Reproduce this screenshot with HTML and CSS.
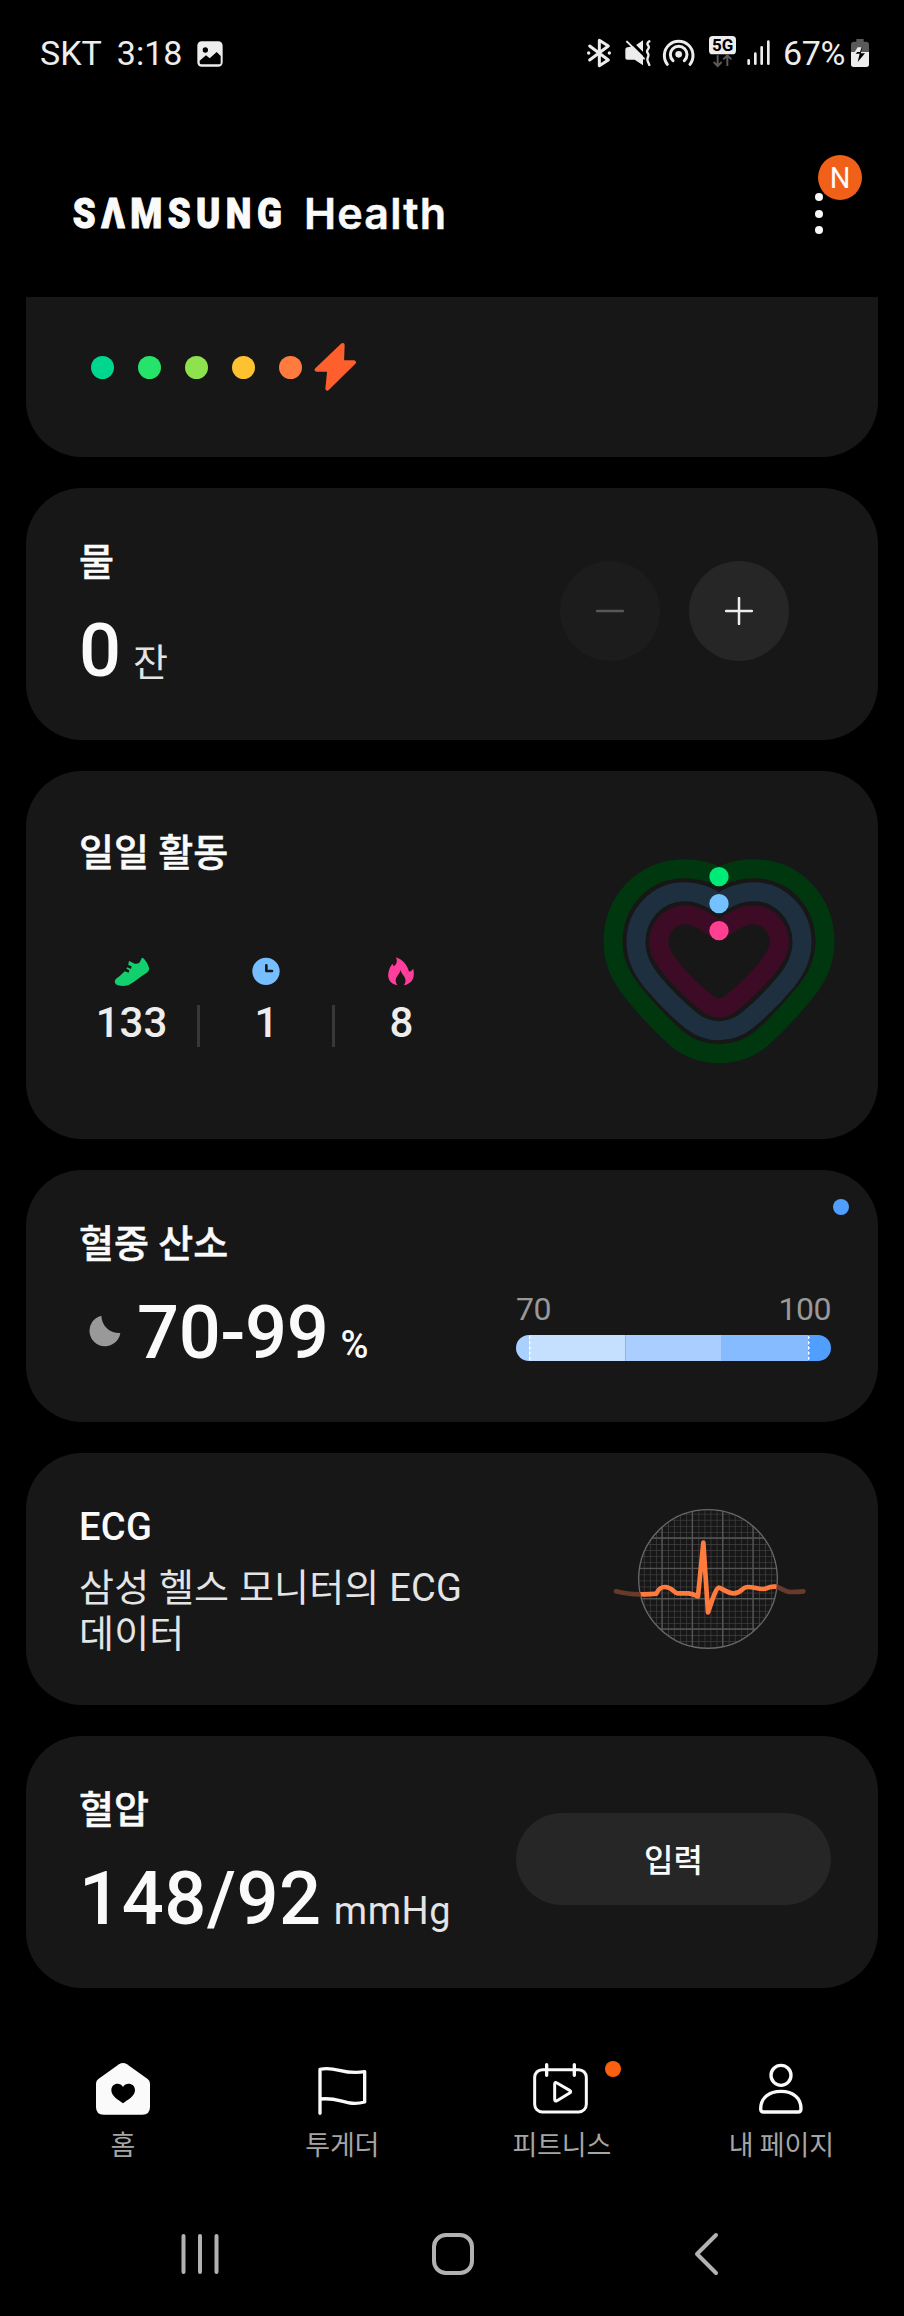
FILE: index.html
```html
<!DOCTYPE html>
<html lang="ko">
<head>
    <meta charset="UTF-8">
    <meta name="viewport" content="width=device-width, initial-scale=1.0">
    <title>Samsung Health</title>
    <link rel="stylesheet" href="styles.css">
</head>
<body>
    <div class="status-bar">
        <span class="carrier">SKT</span>
        <span class="clock">3:18</span>
        <svg class="st-photo" width="26" height="26" viewBox="0 0 78 78">
            <rect x="1" y="1" width="76" height="76" rx="13" fill="#ededed"/>
            <circle cx="25" cy="27" r="8" fill="#000"/>
            <path d="M8 59l19-16 11 9 21-19 12 12v21q0 4-4 4H13q-5 0-5-5z" fill="#000"/>
        </svg>
        <div class="status-right">
            <svg class="st-bt" width="24" height="32" viewBox="405 108 72 96" fill="none" stroke="#ededed" stroke-width="9" stroke-linejoin="round" stroke-linecap="round">
                <path d="M413 138l56 42-27 17v-76l27 17-56 42"/>
                <circle cx="410" cy="159" r="5" fill="#ededed" stroke="none"/>
                <circle cx="472" cy="159" r="5" fill="#ededed" stroke="none"/>
            </svg>
            <svg class="st-mute" width="26" height="32" viewBox="519 108 78 96">
                <path d="M548 138l25-17v75l-25-17h-22q-6 0-6-6v-23q0-8 7-8z" fill="#ededed"/>
                <path d="M530 119l52 52" stroke="#000" stroke-width="9"/>
                <path d="M525 125l51 51" stroke="#ededed" stroke-width="6" stroke-linecap="round"/>
                <path d="M592 124q-9 6-4 12t0 12-1 11 1 12-1 12 5 12" fill="none" stroke="#ededed" stroke-width="7" stroke-linecap="round"/>
            </svg>
            <svg class="st-hotspot" width="33" height="32" viewBox="631 108 99 96" fill="none" stroke="#ededed" stroke-width="9" stroke-linecap="round">
                <circle cx="681" cy="163" r="10" fill="#ededed" stroke="none"/>
                <path d="M664 182a25 25 0 1 1 34 0"/>
                <path d="M647 193a43 43 0 1 1 68 0"/>
            </svg>
            <svg class="st-5g" width="27" height="32" viewBox="771 108 81 96">
                <rect x="771" y="108" width="81" height="55" rx="11" fill="#ededed"/>
                <text x="812" y="154" text-anchor="middle" font-size="51" textLength="64" lengthAdjust="spacingAndGlyphs">5G</text>
                <path d="M797 166v32m-12-12l12 12 12-12M826 198v-32m-12 12l12-12 12 12" fill="none" stroke="#5a5a5a" stroke-width="6"/>
            </svg>
            <svg class="st-signal" width="24" height="32" viewBox="885 108 72 96" stroke="#ededed" stroke-width="8" stroke-linecap="round">
                <path d="M890 181v10M910 161v30M929 142v49M949 125v66"/>
            </svg>
            <span class="battery-text">67%</span>
            <svg class="st-battery" width="20" height="32" viewBox="1194 108 60 96">
                <path d="M1213 117h22v8h8q8 0 8 10v23h-54v-23q0-10 8-10h8z" fill="#5a5a5a"/>
                <path d="M1197 156h54v37q0 8-8 8h-38q-8 0-8-8z" fill="#ededed"/>
                <path d="M1228 142l-17 19h12l-6 25 22-26h-13l5-18z" fill="#000"/>
                <path d="M1217 142h12l-5 14h-16z" fill="#ededed"/>
            </svg>
        </div>
    </div>

    <header class="app-header">
        <svg class="logo" width="400" height="70" viewBox="0 -10 400 70" fill="#fafafa">
            <text class="logo-brand" x="1" y="40" textLength="246" transform="scale(0.85 1)">SΛMSUNG</text>
            <text class="logo-name" x="232" y="41" textLength="142">Health</text>
        </svg>
        <div class="more">
            <i></i><i></i><i></i>
            <span class="badge">N</span>
        </div>
    </header>

    <main class="cards">
        <section class="card card-energy">
            <i class="dot d1"></i>
            <i class="dot d2"></i>
            <i class="dot d3"></i>
            <i class="dot d4"></i>
            <i class="dot d5"></i>
            <svg class="bolt" width="44" height="50" viewBox="0 0 132 150">
                <path d="M86 9L8 83h38l-6 57 80-79H84z" fill="#ff5f2d" stroke="#ff5f2d" stroke-width="12" stroke-linejoin="round"/>
            </svg>
        </section>

        <section class="card">
            <div class="info">
                <h2>물</h2>
                <div class="value"><b>0</b><span class="unit">잔</span></div>
            </div>
            <div class="counter">
                <button class="round disabled">
                    <svg width="28" height="28" viewBox="0 0 28 28"><path d="M1 14h26"/></svg>
                </button>
                <button class="round">
                    <svg width="28" height="28" viewBox="0 0 28 28"><path d="M1 14h26M14 1v26"/></svg>
                </button>
            </div>
        </section>

        <section class="card card-activity">
            <div class="info">
                <h2>일일 활동</h2>
                <div class="stats">
                    <div class="stat">
                        <svg width="36" height="30" viewBox="341 592 108 90">
                            <path d="M386 604q-2 8-2 12l10 4-2 8-11-5-3 4 9 5-2 7-12-4c-9 10-19 18-27 24-6 6-1 16 7 18q18 4 32-1c20-10 34-25 50-34q14-8 11-18-7-20-18-29-4-2-6 5c-3 10-9 13-19 12z" fill="#13d06f"/>
                        </svg>
                        <strong>133</strong>
                    </div>
                    <div class="stat">
                        <svg width="30" height="30" viewBox="754 592 90 90">
                            <circle cx="796" cy="635" r="41" fill="#76beff"/>
                            <path d="M797 617v17h17" fill="none" stroke="#171717" stroke-width="8" stroke-linecap="round" stroke-linejoin="round"/>
                        </svg>
                        <strong>1</strong>
                    </div>
                    <div class="stat">
                        <svg width="30" height="30" viewBox="1160 592 90 90">
                            <path d="M1187 593c18 6 34 22 39 43q8-2 13-9c4 22 2 43-29 50 9-11 6-22-2-31q-7-8-7-15-3 9-8 15c-9 11-9 21-1 31-26-4-34-26-25-48q3-9 9-17l4 8c9-6 12-14 7-27z" fill="#ff3d9c"/>
                        </svg>
                        <strong>8</strong>
                    </div>
                </div>
            </div>
            <svg class="heart" width="240" height="210" viewBox="60 110 720 630" fill="none" stroke-width="57" stroke-linejoin="round">
                <path stroke="#00370f" d="M417 169C380 150 345 145 313 145C190 145 99 243 99 365C99 425 125 475 158 515C195 561 245 615 290 655C330 688 370 700 417 700S504 688 544 655C589 615 639 561 676 515C709 475 735 425 735 365C735 243 644 145 521 145C489 145 454 150 417 169Z"/>
                <path stroke="#1e303f" d="M417 249C385 227 350 214 313 214C232 214 168 282 168 365C168 415 190 450 215 483C255 532 300 574 335 602C362 623 388 631 417 631S472 623 499 602C534 574 579 532 619 483C644 450 666 415 666 365C666 282 602 214 521 214C484 214 449 227 417 249Z"/>
                <path stroke="#3e0b27" d="M417 331C375 302 345 283 315 283C271 283 236 321 236 365C236 395 255 420 275 445C310 488 350 524 385 552Q401 563 417 563T449 552C484 524 524 488 559 445C579 420 598 395 598 365C598 321 563 283 519 283C489 283 459 302 417 331Z"/>
                <g stroke="none">
                    <circle cx="417" cy="169" r="29" fill="#00ea78"/>
                    <circle cx="417" cy="250" r="29" fill="#73c2ff"/>
                    <circle cx="417" cy="331" r="29" fill="#ff4090"/>
                </g>
            </svg>
        </section>

        <section class="card">
            <div class="info">
                <h2>혈중 산소</h2>
                <div class="value oxygen-value">
                    <svg class="moon" width="33" height="33" viewBox="0 0 99 99">
                        <path d="M37 2C38 32 61 55 94 54A46.500 46.500 0 1 1 37 2z" fill="#999"/>
                    </svg>
                    <b>70-99</b><span class="unit percent">%</span>
                </div>
            </div>
            <div class="oxygen">
                <div class="range"><span>70</span><span>100</span></div>
                <div class="bar">
                    <i class="s1"></i><i class="s2"></i><i class="s3"></i><i class="s4"></i><i class="s5"></i>
                </div>
            </div>
            <span class="new-dot"></span>
        </section>

        <section class="card">
            <div class="info">
                <h2 class="latin">ECG</h2>
                <p>삼성 헬스 모니터의 ECG<br>데이터</p>
            </div>
            <svg class="ecg" width="200" height="144" viewBox="83 80 600 432" fill="none">
                <defs>
                    <clipPath id="lens"><circle cx="383" cy="296" r="207"/></clipPath>
                    <pattern id="minor" x="245" y="173" width="18.200" height="18.200" patternUnits="userSpaceOnUse">
                        <path d="M0 0h18.200M0 0v18.200" stroke="#414141" stroke-width="4"/>
                    </pattern>
                </defs>
                <g clip-path="url(#lens)">
                    <rect x="170" y="80" width="430" height="430" fill="url(#minor)"/>
                    <path d="M245 80v430M336 80v430M427 80v430M518 80v430M170 173h430M170 264h430M170 355h430M170 446h430" stroke="#555" stroke-width="4"/>
                </g>
                <circle cx="383" cy="296" r="208" stroke="#686868" stroke-width="4"/>
                <g stroke-width="14" stroke-linecap="round" stroke-linejoin="round">
                    <path d="M107 333Q140 342 180 342M585 319C600 320 612 335 630 335Q650 335 669 333" stroke="#693a29"/>
                    <path d="M180 342Q215 342 228 340C234 326 240 320 254 320C277 320 280 339 292 339H325Q340 341 353 348L369 187L383 396C390 380 404 325 415 322C422 322 440 339 461 339C482 339 485 320 502 320C522 320 530 326 548 326C565 326 560 317 585 319" stroke="#ff7a3d" clip-path="url(#lens)"/>
                </g>
            </svg>
        </section>

        <section class="card">
            <div class="info">
                <h2>혈압</h2>
                <div class="value pressure-value"><b>148/92</b><span class="unit">mmHg</span></div>
            </div>
            <button class="input-btn">입력</button>
        </section>
    </main>

    <nav class="tabs">
        <a class="tab">
            <svg width="60" height="60" viewBox="277 87 180 180">
                <path d="M355 103q12-8 24 0l62 44q7 5 7 14v70q0 23-23 23H309q-23 0-23-23v-70q0-9 7-14z" fill="#fafafa"/>
                <path d="M367 171c-8-15-35-13-35 10 0 17 21 29 35 39 14-10 36-22 36-39 0-23-28-25-36-10z" fill="#000"/>
            </svg>
            <span>홈</span>
        </a>
        <a class="tab">
            <svg width="60" height="60" viewBox="938 87 180 180" fill="none" stroke="#fafafa" stroke-width="10" stroke-linejoin="round" stroke-linecap="round">
                <path d="M962 250V118C1010 106 1030 137 1096 125V216C1042 231 1022 200 964 207"/>
            </svg>
            <span>투게더</span>
        </a>
        <a class="tab">
            <svg width="60" height="60" viewBox="240 87 180 180" fill="none" stroke="#fafafa" stroke-width="9" stroke-linejoin="round" stroke-linecap="round">
                <rect x="248" y="119" width="155" height="127" rx="23"/>
                <path d="M284 104v32M367 104v32" stroke-width="10"/>
                <path d="M308 163q0-8 7-4l38 22q6 4 0 8l-38 23q-7 4-7-4z"/>
            </svg>
            <span>피트니스</span>
            <i class="tab-dot"></i>
        </a>
        <a class="tab">
            <svg width="60" height="60" viewBox="896 87 180 180" fill="none" stroke="#fafafa" stroke-width="10" stroke-linejoin="round">
                <circle cx="986" cy="136" r="30"/>
                <path d="M925 236c0-32 25-52 61-52s60 20 60 52q0 10-9 10H934q-9 0-9-10z"/>
            </svg>
            <span>내 페이지</span>
        </a>
    </nav>

    <div class="system-nav">
        <svg width="44" height="44" viewBox="0 0 44 44"><path d="M5.500 4v36M22 4v36M38.500 4v36"/></svg>
        <svg width="44" height="44" viewBox="0 0 44 44"><rect x="3" y="3" width="38" height="38" rx="12"/></svg>
        <svg width="44" height="44" viewBox="0 0 44 44"><path d="M32 3L13 22l19 19"/></svg>
    </div>
</body>
</html>
```

FILE: styles.css
```css
* {
    box-sizing: border-box;
    margin: 0;
    padding: 0;
}
body {
    width: 904px;
    height: 2316px;
    background: #000;
    color: #fafafa;
    font-family: Roboto, "Noto Sans CJK KR", sans-serif;
    overflow: hidden;
}
svg {
    display: block;
    flex: none;
}
button {
    border: none;
    color: #fafafa;
    font-family: inherit;
}

/* 상태 표시줄 */
.status-bar {
    display: flex;
    align-items: center;
    height: 104px;
    padding: 0 34px 0 40px;
    font-size: 34px;
    line-height: 40px;
    color: #ededed;
}
.carrier,
.clock {
    padding-top: 1px;
}
.clock {
    margin-left: 15px;
}
.st-photo {
    margin: 3px 0 0 15px;
}
.status-right {
    display: flex;
    align-items: center;
    margin-left: auto;
}
.st-mute {
    margin-left: 14px;
}
.st-hotspot {
    margin-left: 11px;
}
.st-5g {
    margin-left: 14px;
    font-weight: 700;
}
.st-signal {
    margin-left: 11px;
}
.battery-text {
    width: 67px;
    margin-left: 12px;
    padding-top: 1px;
    letter-spacing: -0.300px;
}

/* 헤더 */
.app-header {
    display: flex;
    justify-content: space-between;
    height: 193px;
    padding: 84px 79px 0 72px;
}
.logo {
    margin-top: -10px;
}
.logo-brand {
    font-family: Roboto, sans-serif;
    font-size: 43px;
    font-weight: 900;
    stroke: #fafafa;
    stroke-width: 1;
}
.logo-name {
    font-family: Inter, sans-serif;
    font-size: 43px;
    font-weight: 600;
    stroke: #fafafa;
    stroke-width: 0.500;
}
.more {
    position: relative;
    display: flex;
    flex-direction: column;
    gap: 8.500px;
    width: 10px;
    padding-top: 5px;
}
.more i {
    width: 8px;
    height: 8px;
    border-radius: 50%;
    background: #fafafa;
}
.badge {
    position: absolute;
    left: 3px;
    top: -33px;
    width: 44px;
    height: 45px;
    border-radius: 50%;
    background: #f06018;
    font-size: 29px;
    line-height: 47px;
    text-align: center;
}

/* 카드 */
.cards {
    display: flex;
    flex-direction: column;
    gap: 31px;
    padding: 0 26px;
}
.card {
    position: relative;
    display: flex;
    justify-content: space-between;
    height: 252px;
    padding: 0 47px 0 53px;
    border-radius: 56px;
    background: #171717;
}
.card h2 {
    margin-top: 51px;
    font-size: 38px;
    font-weight: 500;
    line-height: 46px;
    -webkit-text-stroke: 0.500px #fafafa;
}
.card h2.latin {
    -webkit-text-stroke: 0;
    letter-spacing: 0.300px;
}
.card p {
    margin-top: 15px;
    font-size: 38px;
    line-height: 46px;
    letter-spacing: 0.200px;
    color: #e4e4e4;
    white-space: nowrap;
}
.value {
    display: flex;
    align-items: baseline;
    margin-top: 22px;
    line-height: 88px;
}
.value b {
    font-size: 74px;
    font-weight: 500;
}
.unit {
    margin-left: 12px;
    font-size: 38px;
    color: #e4e4e4;
}
.oxygen-value b {
    letter-spacing: -0.400px;
}
.percent {
    margin-left: 12px;
    font-weight: 500;
    color: #fafafa;
}
.pressure-value b {
    letter-spacing: 0.600px;
}
.pressure-value .unit {
    letter-spacing: 0.600px;
}

.card-energy {
    justify-content: flex-start;
    align-items: center;
    height: 160px;
    padding: 0 0 20px 65px;
    border-radius: 0 0 56px 56px;
}
.dot {
    width: 23px;
    height: 23px;
    margin-right: 24px;
    border-radius: 50%;
}
.d1 { background: #00d78e; }
.d2 { background: #26e36a; }
.d3 { background: #8ee24d; }
.d4 { background: #fcc22f; }
.d5 { background: #ff7c3e; margin-right: 12px; }

.counter {
    display: flex;
    gap: 29px;
    padding: 73px 42px 0 0;
}
.round {
    display: flex;
    align-items: center;
    justify-content: center;
    width: 100px;
    height: 100px;
    border-radius: 50%;
    background: #262626;
}
.round path {
    stroke: #ededed;
    stroke-width: 2.500;
    stroke-linecap: round;
}
.round.disabled {
    background: #1c1c1c;
}
.round.disabled path {
    stroke: #585858;
}

.card-activity {
    height: 368px;
    padding-right: 38px;
}
.card-activity h2 {
    margin-top: 59px;
}
.stats {
    display: flex;
    margin: 81px 0 0 -15px;
}
.stat {
    position: relative;
    display: flex;
    flex-direction: column;
    align-items: center;
    width: 135px;
}
.stat strong {
    margin-top: 11px;
    font-size: 42px;
    font-weight: 500;
    line-height: 50px;
    color: #ededed;
}
.stat + .stat::before {
    content: "";
    position: absolute;
    left: -2px;
    top: 48px;
    width: 3px;
    height: 42px;
    background: #383838;
}
.heart {
    margin-top: 86px;
}

.moon {
    align-self: center;
    margin: 0 15px 16px 10px;
}
.oxygen {
    width: 315px;
    padding-top: 120px;
}
.range {
    display: flex;
    justify-content: space-between;
    font-size: 32px;
    line-height: 38px;
    letter-spacing: -0.500px;
    color: #999;
}
.bar {
    display: flex;
    height: 26px;
    margin-top: 7px;
    border-radius: 13px;
    overflow: hidden;
}
.s1 { width: 13px; background: #a9d0ff; }
.s2 { width: 97px; background: #c5dfff; border-right: 1px solid #9bb3d0; }
.s3 { width: 95px; background: #a9ceff; }
.s4 { width: 87px; background: #86bbff; }
.s5 { width: 23px; background: #509fff; }
/* 측정 범위 점선 */
.s2, .s5 {
    background-image: radial-gradient(circle at 0 2.500px, #fff 1.400px, transparent 1.900px);
    background-size: 3px 5.200px;
    background-repeat: repeat-y;
}
.new-dot {
    position: absolute;
    right: 29px;
    top: 29px;
    width: 16px;
    height: 16px;
    border-radius: 50%;
    background: #509fff;
}
.ecg {
    margin: 54px 23px 0 0;
}
.input-btn {
    width: 315px;
    height: 92px;
    margin-top: 77px;
    padding-bottom: 3px;
    border-radius: 46px;
    background: #262626;
    font-size: 32px;
    font-weight: 500;
}

/* 하단 탭 */
.tabs {
    display: flex;
    padding: 71px 13px 0;
}
.tab {
    position: relative;
    display: flex;
    flex-direction: column;
    align-items: center;
    width: 219.500px;
}
.tab span {
    margin-top: 10px;
    font-size: 27px;
    line-height: 34px;
    letter-spacing: -0.200px;
    color: #a5a5a5;
}
.tab-dot {
    position: absolute;
    left: 153px;
    top: 2px;
    width: 16px;
    height: 16px;
    border-radius: 50%;
    background: #fa6010;
}
.system-nav {
    display: flex;
    justify-content: center;
    gap: 209px;
    padding: 69px 0 0 2px;
}
.system-nav svg {
    fill: none;
    stroke: #b2b2b2;
    stroke-width: 4;
    stroke-linecap: round;
    stroke-linejoin: round;
}
```
